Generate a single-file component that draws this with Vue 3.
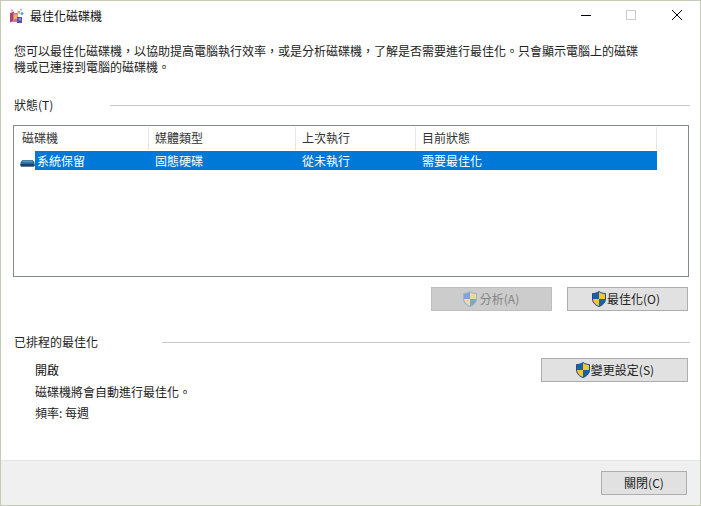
<script setup>
const columns = [
  { label: '磁碟機', width: 135 },
  { label: '媒體類型', width: 147 },
  { label: '上次執行', width: 120 },
  { label: '目前狀態', width: 241 }
]
const cells = ['系統保留', '固態硬碟', '從未執行', '需要最佳化']
</script>

<template>
  <div class="win">
    <header class="titlebar">
      <svg class="appicon" width="16" height="16" viewBox="0 0 16 16">
        <path d="M1 5L5 3.5V13L1 14.5Z" fill="#a8466e" />
        <path d="M4 5H9V14H4Z" fill="#d9709a" />
        <path d="M5 6.5H8.5V11H5Z" fill="#eeb45a" />
        <path d="M8 9H13V15H8Z" fill="#5a4fa8" />
        <path d="M9.5 10H12V12.5H9.5Z" fill="#8f86d4" />
        <path d="M8.5 3H11V5.5H8.5Z" fill="#9cc46a" />
        <circle cx="13" cy="5.5" r="1.5" fill="#5aa6cc" />
        <circle cx="12" cy="1.8" r="1" fill="#c9a0d8" />
        <path d="M2 1.5H4V3.5H2Z" fill="#e3a0b8" />
      </svg>
      <span class="title">最佳化磁碟機</span>
      <div class="controls">
        <svg width="12" height="12" viewBox="0 0 12 12"><path d="M1 6.5H11" stroke="#000" fill="none" /></svg>
        <svg width="12" height="12" viewBox="0 0 12 12"><rect x="1.5" y="1.5" width="9" height="9" stroke="#ccc" fill="none" /></svg>
        <svg class="c-close" width="12" height="12" viewBox="0 0 12 12"><path d="M1 1L11 11M11 1L1 11" stroke="#000" fill="none" /></svg>
      </div>
    </header>

    <main class="content">
      <p class="intro">您可以最佳化磁碟機&#xFF0C;以協助提高電腦執行效率&#xFF0C;或是分析磁碟機&#xFF0C;了解是否需要進行最佳化。只會顯示電腦上的磁碟<br />機或已連接到電腦的磁碟機。</p>

      <div class="section first">
        <span>狀態(T)</span>
        <i class="rule"></i>
      </div>

      <div class="list">
        <div class="row head">
          <div v-for="c in columns" :key="c.label" class="hcell" :style="{ width: c.width + 'px' }">{{ c.label }}</div>
        </div>
        <div class="row item">
          <svg class="disk" width="15" height="12" viewBox="0 0 15 12">
            <path d="M3 5H12C13 5 14.5 7 14.5 8V10.5C14.5 11 14 11.5 13.5 11.5H1.5C1 11.5 .5 11 .5 10.5V8C.5 7 2 5 3 5Z" fill="#2c6a96" />
            <path d="M.5 9H14.5V10.5C14.5 11 14 11.5 13.5 11.5H1.5C1 11.5 .5 11 .5 10.5Z" fill="#1b4568" />
            <path d="M3.2 5.5H11.8L13 7.2H2Z" fill="#5a97bf" />
          </svg>
          <div class="selected">
            <div v-for="(t, i) in cells" :key="t" class="cell" :style="{ width: (i === 0 ? columns[0].width - 21 : columns[i].width) + 'px' }">{{ t }}</div>
          </div>
        </div>
      </div>

      <div class="actions">
        <button class="btn wide disabled" type="button">
          <svg class="shield" width="16" height="18" viewBox="0 0 16 18">
            <path d="M8 1.5C10 3 12 3.5 14.5 3.5V9C14.5 12.5 11.5 15.5 8 16.5C4.5 15.5 1.5 12.5 1.5 9V3.5C4 3.5 6 3 8 1.5Z" fill="#7ea6d0" stroke="#9db4cc" />
            <path d="M8 2V9H14V4C12 4 10 3.5 8 2ZM8 9H2C2 12 5 15 8 16Z" fill="#ecd9a0" />
          </svg>
          分析(A)
        </button>
        <button class="btn wide optimize" type="button">
          <svg class="shield" width="16" height="18" viewBox="0 0 16 18">
            <path d="M8 1.5C10 3 12 3.5 14.5 3.5V9C14.5 12.5 11.5 15.5 8 16.5C4.5 15.5 1.5 12.5 1.5 9V3.5C4 3.5 6 3 8 1.5Z" fill="#1a5fa8" stroke="#1d4f86" />
            <path d="M8 2V9H14V4C12 4 10 3.5 8 2ZM8 9H2C2 12 5 15 8 16Z" fill="#f5c52c" />
          </svg>
          最佳化(O)
        </button>
      </div>

      <div class="section second">
        <span>已排程的最佳化</span>
        <i class="rule"></i>
      </div>

      <div class="schedule">
        <div class="sched-text">
          <div class="l1">開啟</div>
          <div class="l2">磁碟機將會自動進行最佳化。</div>
          <div class="l3">頻率: 每週</div>
        </div>
        <button class="btn change" type="button">
          <svg class="shield" width="16" height="18" viewBox="0 0 16 18">
            <path d="M8 1.5C10 3 12 3.5 14.5 3.5V9C14.5 12.5 11.5 15.5 8 16.5C4.5 15.5 1.5 12.5 1.5 9V3.5C4 3.5 6 3 8 1.5Z" fill="#1a5fa8" stroke="#1d4f86" />
            <path d="M8 2V9H14V4C12 4 10 3.5 8 2ZM8 9H2C2 12 5 15 8 16Z" fill="#f5c52c" />
          </svg>
          變更設定(S)
        </button>
      </div>
    </main>

    <footer class="footer">
      <button class="btn close" type="button">關閉(C)</button>
    </footer>
  </div>
</template>

<style>
html, body { margin: 0; background: #fff; }
</style>

<style scoped>
.win {
  box-sizing: border-box;
  width: 701px;
  height: 506px;
  border: 1px solid #c3cbb4;
  background: #fff;
  display: flex;
  flex-direction: column;
  font-family: "Noto Sans CJK TC", "Liberation Sans", sans-serif;
  font-size: 12px;
  line-height: 16px;
  color: #222;
  overflow: hidden;
}
.titlebar {
  height: 30px;
  display: flex;
  align-items: center;
  padding-left: 8px;
  flex: none;
}
.appicon { margin-right: 5px; }
.title { color: #111; }
.controls {
  margin-left: auto;
  margin-bottom: 2px;
  display: flex;
  align-items: center;
  gap: 33px;
  padding-right: 17px;
}
.c-close { margin-left: 1px; }
.content {
  flex: 1;
  padding: 12px 10px 0 12px;
  display: flex;
  flex-direction: column;
}
.intro { margin: 0; padding-left: 1px; }
.section {
  display: flex;
  align-items: center;
  height: 16px;
  padding-left: 1px;
}
.section span { white-space: nowrap; }
.rule {
  flex: 1;
  height: 1px;
  background: #c8c8c8;
}
.first { margin-top: 22px; }
.first .rule { margin-left: 57px; }
.second { margin-top: 23px; }
.second .rule { margin-left: 64px; }
.list {
  box-sizing: border-box;
  margin-top: 12px;
  width: 676px;
  height: 152px;
  border: 1px solid #828790;
  padding: 1px 0 0 0;
}
.row { display: flex; }
.head { height: 23px; }
.hcell {
  box-sizing: border-box;
  padding: 3px 0 0 6px;
  border-right: 1px solid #e5e5e5;
  color: #333;
}
.hcell:first-child { padding-left: 8px; }
.item {
  height: 19px;
  align-items: center;
  margin-top: 1px;
}
.disk { margin-left: 6px; flex: none; }
.selected {
  display: flex;
  background: #0078d7;
  height: 19px;
  align-items: center;
  color: #fff;
}
.cell {
  box-sizing: border-box;
  padding-left: 2px;
}
.cell + .cell { padding-left: 6px; }
.actions {
  display: flex;
  justify-content: flex-end;
  gap: 15px;
  margin-top: 10px;
  padding-right: 2px;
}
.btn {
  box-sizing: border-box;
  height: 24px;
  border: 1px solid #adadad;
  background: #e1e1e1;
  font: inherit;
  color: #222;
  padding: 0;
  display: flex;
  align-items: center;
  justify-content: center;
}
.wide { width: 121px; }
.optimize { padding-right: 4px; }
.disabled {
  background: #ccc;
  border-color: #bfbfbf;
  color: #838383;
  padding-right: 2px;
}
.disabled .shield { margin-right: 2px; }
.schedule {
  display: flex;
  justify-content: space-between;
  padding: 8px 2px 0 22px;
}
.sched-text { padding-top: 4px; }
.l1 { color: #111; }
.l2 { margin-top: 6px; }
.l3 { margin-top: 5px; }
.change { width: 147px; }
.footer {
  flex: none;
  height: 45px;
  background: #f0f0f0;
  border-top: 1px solid #e6e6e6;
  box-sizing: border-box;
  display: flex;
  justify-content: flex-end;
  align-items: flex-start;
  padding: 10px 13px 0 0;
}
.close { width: 86px; }
</style>
